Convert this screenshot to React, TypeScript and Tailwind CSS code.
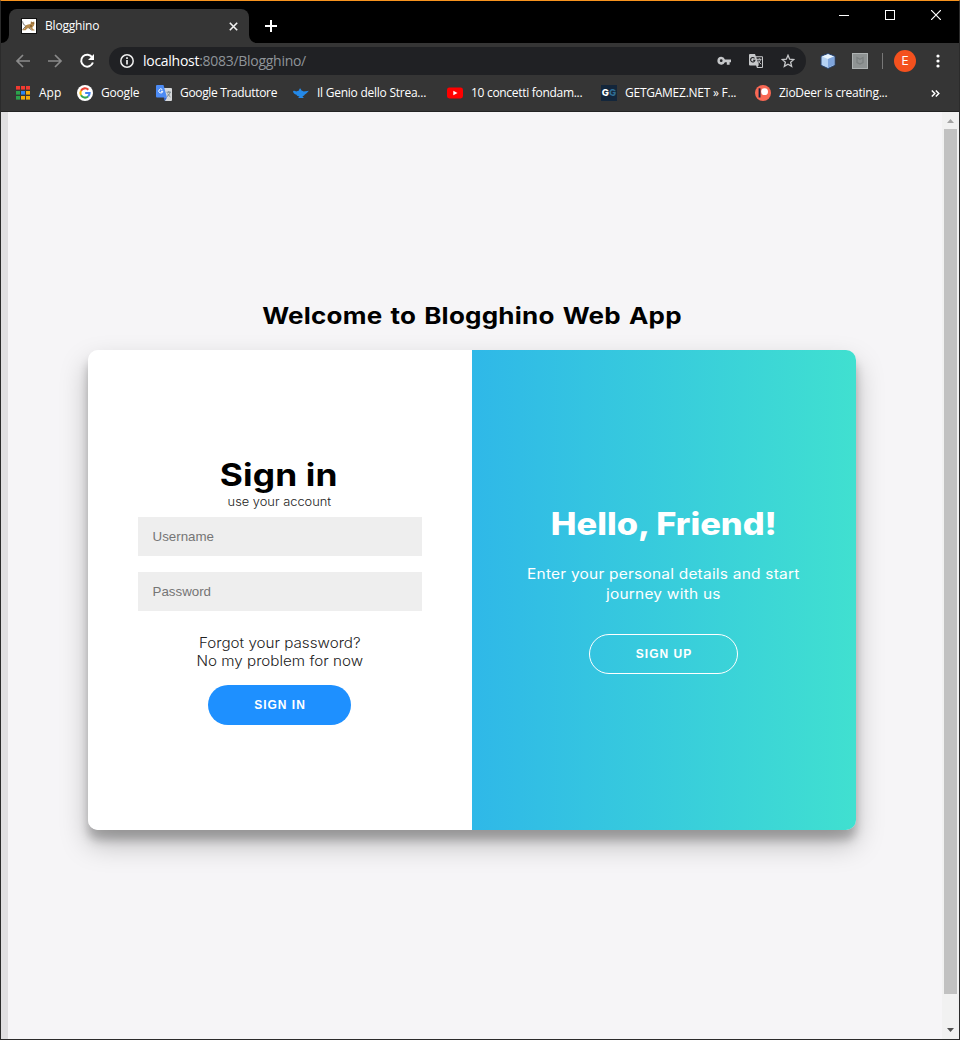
import type { ReactNode } from "react";

const segoe = "font-['Open_Sans','Noto_Sans',sans-serif]";
const geo = "font-['Inter','Noto_Sans',sans-serif]";

function Favicon() {
  return (
    <svg width="16" height="16" viewBox="0 0 16 16" className="block">
      <rect width="16" height="16" fill="#111" />
      <rect x="1" y="1" width="14" height="14" fill="#fff" />
      <path d="M10 3l1 1.2 2.2-.6.3 1.8-.6 2.3-1.5 1.6.4 1.6 1.7.8v.8h-2.5L9.600 10.400 6.500 10.200 4.500 12.300H1.500v-.8l2-.7.8-3.300L7 6.500l2.500-.5z" fill="#b58a4c" />
      <path d="M4.300 7.500C2.500 7 2 5.500 1.600 3.400M1.800 11.500l2.500-3M8 9.800l2.500 2.400" stroke="#555" strokeWidth=".8" fill="none" />
      <path d="M10.500 5h1M12.300 5.200h.7M9 8h2" stroke="#5b3c17" strokeWidth=".9" />
    </svg>
  );
}

function AppsIcon() {
  const colors = ["#f13a30", "#f13a30", "#f13a30", "#2ba24c", "#2a84f0", "#f4ac0b", "#2ba24c", "#f4ac0b", "#f4ac0b"];
  return (
    <svg width="14" height="14" viewBox="0 0 14 14" className="block">
      {colors.map((c, i) => (
        <g key={i}>
          <rect x={(i % 3) * 5} y={Math.floor(i / 3) * 5} width="4" height="3" fill={c} />
          <rect x={(i % 3) * 5} y={Math.floor(i / 3) * 5 + 3} width="4" height="1" fill={c} opacity=".6" />
        </g>
      ))}
    </svg>
  );
}

function GoogleIcon() {
  return (
    <svg width="16" height="16" viewBox="0 0 16 16" className="block">
      <circle cx="8" cy="8" r="8" fill="#fff" />
      <g fill="none" strokeWidth="2.100">
        <path d="M11.300 4.700A4.600 4.600 0 0 0 4 5.700" stroke="#ea4335" />
        <path d="M4 5.700a4.600 4.600 0 0 0 0 4.600" stroke="#fbbc05" />
        <path d="M4 10.300a4.600 4.600 0 0 0 7.100 1.100" stroke="#34a853" />
        <path d="M11.100 11.400A4.600 4.600 0 0 0 12.600 8H8.200" stroke="#4285f4" />
      </g>
    </svg>
  );
}

function TranslateColor() {
  return (
    <svg width="16" height="16" viewBox="0 0 16 16" className="block">
      <path d="M6 3h9a1 1 0 0 1 1 1v11a1 1 0 0 1-1 1H9z" fill="#d6d8da" />
      <path d="M1 0h6.500l3.500 12.500H1a1 1 0 0 1-1-1V1a1 1 0 0 1 1-1z" fill="#4c8bf5" />
      <path d="M7.500 12.500H11L9 16z" fill="#3367d6" />
      <path d="M6.300 4.600A2 2 0 1 0 6.800 6.300H5" stroke="#fff" fill="none" />
      <path d="M10.500 7.200H15M12.800 6v1.200M14 7.300c-.5 2-1.500 3.200-3 4.200M11.700 8.500c.6 1.500 1.500 2.500 2.800 3.500" stroke="#6f7f86" fill="none" strokeWidth=".9" />
    </svg>
  );
}

function LampIcon() {
  return (
    <svg width="16" height="16" viewBox="0 0 16 16" className="block">
      <path d="M7 3.300l1 1 .2 1 2.500 1.100L16 5.700c-1.300.6-1.800 2.600-4.200 3.900-.6 1-1.500 1.500-2.300 1.900l1.500 1.500H5l1.500-1.500C5 11.200 4 10.700 3.500 9.700 1.500 9.200.2 8 0 6.200c1-.6 2-.4 3.200.3L6 5.400l.2-1z" fill="#2489e8" />
    </svg>
  );
}

function YoutubeIcon() {
  return (
    <svg width="16" height="16" viewBox="0 0 16 16" className="block">
      <rect y="2.500" width="16" height="11" rx="2.400" fill="#f00" />
      <path d="M6.300 5.700v4.600L10.500 8z" fill="#fff" />
    </svg>
  );
}

function GameIcon() {
  return (
    <span className={`flex h-4 w-4 items-center justify-center bg-[#13263b] text-[9.5px] font-extrabold leading-none ${geo}`}>
      <span className="text-white">G</span>
      <span className="text-[#2f6c92]">G</span>
    </span>
  );
}

function PatreonIcon() {
  return (
    <svg width="16" height="16" viewBox="0 0 16 16" className="block">
      <circle cx="8" cy="8" r="8" fill="#f96854" />
      <rect x="3.600" y="3.300" width="1.900" height="9.200" fill="#15233f" />
      <circle cx="9.600" cy="6.700" r="3.400" fill="#fff" />
    </svg>
  );
}

function Bookmark({ icon, label, item, text }: { icon: ReactNode; label: string; item: string; text: string }) {
  return (
    <div className={`flex shrink-0 items-center ${item}`}>
      {icon}
      <span className={`whitespace-nowrap text-[12px] leading-4 text-white ${text}`}>{label}</span>
    </div>
  );
}

function TabStrip() {
  return (
    <div className="flex h-[42px] bg-black">
      <div className="flex w-2 items-end">
        <svg width="8" height="8" viewBox="0 0 8 8" className="block"><path d="M8 0v8H0a8 8 0 0 0 8-8z" fill="#353535" /></svg>
      </div>
      <div className="mt-2 flex h-[34px] w-[240px] items-center rounded-t-lg bg-[#353535] pl-3">
        <Favicon />
        <span className="ml-2 w-[184px] text-[12px] leading-4 tracking-[-0.2px] text-white">Blogghino</span>
        <svg width="9" height="9" viewBox="0 0 9 9" className="block"><path d="M.8.8l7.400 7.400M8.200.8L.8 8.200" stroke="#f2f2f2" strokeWidth="1.600" /></svg>
      </div>
      <div className="flex w-2 items-end">
        <svg width="8" height="8" viewBox="0 0 8 8" className="block"><path d="M0 0v8h8a8 8 0 0 1-8-8z" fill="#353535" /></svg>
      </div>
      <svg width="12" height="12" viewBox="0 0 12 12" className="ml-2 mt-[19px] block"><path d="M6 0v12M0 6h12" stroke="#fff" strokeWidth="2" /></svg>
      <div className="ml-auto flex h-7 items-center pr-[18px]">
        <svg width="10" height="10" viewBox="0 0 10 10" className="mr-9 block"><path d="M0 5.500h10" stroke="#fff" /></svg>
        <svg width="10" height="10" viewBox="0 0 10 10" className="mr-9 block"><rect x=".5" y=".5" width="9" height="9" fill="none" stroke="#fff" /></svg>
        <svg width="10" height="10" viewBox="0 0 10 10" className="block"><path d="M0 0l10 10M10 0L0 10" stroke="#fff" strokeWidth="1.200" /></svg>
      </div>
    </div>
  );
}

function Toolbar() {
  return (
    <div className="flex h-9 items-center bg-[#353535] pl-[14px]">
      <svg width="16" height="16" viewBox="0 0 16 16" className="block"><path d="M15 8H2.500M8 2L2 8l6 6" stroke="#8a8a8a" strokeWidth="1.700" fill="none" /></svg>
      <svg width="16" height="16" viewBox="0 0 16 16" className="ml-4 block"><path d="M1 8h12.500M8 2l6 6-6 6" stroke="#8a8a8a" strokeWidth="1.700" fill="none" /></svg>
      <svg width="16" height="16" viewBox="0 0 16 16" className="ml-4 block"><path d="M13.300 4.500A6 6 0 1 0 13.900 9.500" stroke="#fff" strokeWidth="2" fill="none" /><path d="M15 1v6H9z" fill="#fff" /></svg>
      <div className="ml-[14px] flex h-7 w-[697px] items-center rounded-full bg-[#202124] pl-[11px]">
        <svg width="14" height="14" viewBox="0 0 14 14" className="block"><circle cx="7" cy="7" r="6.200" fill="none" stroke="#eee" strokeWidth="1.500" /><path d="M7 6v4.500M7 3.300v1.700" stroke="#eee" strokeWidth="1.700" /></svg>
        <span className="ml-[9px] w-[574px] whitespace-nowrap text-[14px] leading-5 tracking-[-0.28px] text-[#8f9499]"><span className="text-white">localhost</span>:8083/Blogghino/</span>
        <svg width="14" height="10" viewBox="0 0 15 10" className="block"><path fillRule="evenodd" d="M4.500.5a4.200 4.200 0 0 1 4 2.800H15v3h-1.500V9h-3V6.300h-2A4.200 4.200 0 1 1 4.500.5zm0 2.700a1.500 1.500 0 1 0 0 3 1.500 1.500 0 0 0 0-3z" fill="#c6c8ca" /></svg>
        <svg width="14" height="14" viewBox="0 0 14 14" className="ml-[18px] block">
          <path d="M1 0h5l.8 2.300H13a1 1 0 0 1 1 1V13a1 1 0 0 1-1 1H8l-.9-2.500H1a1 1 0 0 1-1-1V1a1 1 0 0 1 1-1z" fill="#c6c8ca" />
          <path d="M7.300 3.300H13V13H8.500l1.300-2z" fill="#202124" />
          <path d="M5.500 4.300A2.200 2.200 0 1 0 6 6.200H4" stroke="#202124" fill="none" strokeWidth="1.100" />
          <path d="M8 5.300h4.500M10.300 4.300v1M11.500 5.500c-.5 2-1.300 3-2.500 4M9.300 6.500c.5 1.500 1.500 2.500 2.800 3.700" stroke="#c6c8ca" fill="none" />
        </svg>
        <svg width="14" height="14" viewBox="0 0 14 14" className="ml-[18px] block"><path d="M7 1.300l1.650 3.850 4.200.35-3.200 2.750 1 4.100L7 10.150l-3.650 2.200 1-4.100-3.200-2.750 4.200-.35z" stroke="#c6c8ca" strokeWidth="1.300" fill="none" /></svg>
      </div>
      <svg width="16" height="16" viewBox="0 0 16 16" className="ml-[14px] block">
        <path d="M8 .5l7 2.800v9L8 15.500 1 12.300v-9z" fill="#b5d2f3" stroke="#28436f" />
        <path d="M8 1.200l6 2.300L8 6 2 3.500z" fill="#e9f4fd" />
        <path d="M8 6l6-2.500v8.300L8 14.700z" fill="#7fa5dc" />
      </svg>
      <svg width="16" height="16" viewBox="0 0 16 16" className="ml-4 block"><rect x=".5" y=".5" width="15" height="15" fill="#8f9393" stroke="#aeb2b2" /><path d="M5 4.500v5L8 11l3-1.500v-5L8 6.200z" fill="none" stroke="#7c8080" strokeWidth="1.300" /></svg>
      <span className="ml-[14px] h-4 w-px bg-[#777]" />
      <span className={`ml-[11px] flex h-[22px] w-[22px] items-center justify-center rounded-full bg-[#f4511e] text-[12px] leading-none text-white ${geo}`}>E</span>
      <svg width="4" height="14" viewBox="0 0 4 14" className="ml-[19.5px] block"><g fill="#fff"><circle cx="2" cy="2" r="1.600" /><circle cx="2" cy="7" r="1.600" /><circle cx="2" cy="12" r="1.600" /></g></svg>
    </div>
  );
}

function BookmarksBar() {
  return (
    <div className="flex h-[33px] items-center border-b border-[#232323] bg-[#353535] pb-1 pl-[15px]">
      <Bookmark icon={<AppsIcon />} label="App" item="w-[61px]" text="ml-[9px]" />
      <Bookmark icon={<GoogleIcon />} label="Google" item="w-[79px]" text="ml-2 tracking-[-0.2px]" />
      <Bookmark icon={<TranslateColor />} label="Google Traduttore" item="w-[137px]" text="ml-2 tracking-[-0.34px]" />
      <Bookmark icon={<LampIcon />} label="Il Genio dello Strea..." item="w-[154px]" text="ml-2 tracking-[-0.25px]" />
      <Bookmark icon={<YoutubeIcon />} label="10 concetti fondam..." item="w-[154px]" text="ml-2 tracking-[-0.3px]" />
      <Bookmark icon={<GameIcon />} label="GETGAMEZ.NET » F..." item="w-[154px]" text="ml-2 tracking-[-0.25px]" />
      <Bookmark icon={<PatreonIcon />} label="ZioDeer is creating..." item="w-[176px]" text="ml-2 tracking-[-0.25px]" />
      <svg width="9" height="7" viewBox="0 0 9 7" className="block"><path d="M.8.500l3 3-3 3M4.800.500l3 3-3 3" fill="none" stroke="#fff" strokeWidth="1.500" /></svg>
    </div>
  );
}

function SignInPanel() {
  return (
    <div className="flex w-1/2 flex-col items-center bg-white px-[50px] pt-[105px]">
      <h1 className={`mr-0.5 scale-x-[1.14] whitespace-nowrap text-[31px] font-bold leading-10 tracking-[0.1px] ${geo}`}>Sign in</h1>
      <span className={`mr-px scale-x-[1.07] whitespace-nowrap text-[12px] font-light leading-[14px] text-[#222] ${geo}`}>use your account</span>
      <input placeholder="Username" className="mt-2 h-[39px] w-[284px] bg-[#eee] px-[14.5px] font-['Liberation_Sans',sans-serif] text-[13.333px] placeholder:text-[#757575]" />
      <input placeholder="Password" className="mt-4 h-[39px] w-[284px] bg-[#eee] px-[14.5px] font-['Liberation_Sans',sans-serif] text-[13.333px] placeholder:text-[#757575]" />
      <p className={`mt-[23px] scale-x-[1.085] whitespace-nowrap text-center text-[14px] font-light leading-[18px] text-[#222] ${geo}`}>Forgot your password?<br />No my problem for now</p>
      <button className="mr-px mt-[15px] h-10 w-[143px] rounded-[20px] bg-[#1e90ff] pl-px font-['Liberation_Sans',sans-serif] text-[12px] font-bold tracking-[1px] text-white">SIGN IN</button>
    </div>
  );
}

function WelcomePanel() {
  return (
    <div className="flex w-1/2 flex-col items-center bg-linear-to-r/srgb from-[#2fb8e8] to-[#40e0d0] pt-[154px] text-white">
      <h1 className={`scale-x-[1.11] whitespace-nowrap text-[31px] font-extrabold leading-10 ${geo}`}>Hello, Friend!</h1>
      <p className={`mr-px mt-5 scale-x-[1.105] whitespace-nowrap text-center text-[14px] leading-5 tracking-[0.2px] ${geo}`}>Enter your personal details and start<br />journey with us</p>
      <button className="mr-px mt-[30px] h-10 w-[149px] rounded-[20px] border border-white pl-px font-['Liberation_Sans',sans-serif] text-[12px] font-bold tracking-[1px]">SIGN UP</button>
    </div>
  );
}

function Scrollbar() {
  return (
    <div className="flex w-[17px] shrink-0 flex-col items-center bg-[#f1f1f1]">
      <svg width="7" height="4" viewBox="0 0 7 4" className="mt-[7px] block"><path d="M0 4l3.500-4L7 4z" fill="#a3a3a3" /></svg>
      <div className="mt-1.5 h-[865px] w-[13px] bg-[#c1c1c1]" />
      <svg width="7" height="4" viewBox="0 0 7 4" className="mt-[34px] block"><path d="M0 0l3.500 4L7 0z" fill="#505050" /></svg>
    </div>
  );
}

export default function App() {
  return (
    <div className={`flex h-[1040px] w-[960px] flex-col overflow-hidden border border-[#2b2b2b] border-t-[#f7931e] bg-[#f6f5f7] text-black ${segoe}`}>
      <TabStrip />
      <Toolbar />
      <BookmarksBar />
      <div className="flex flex-1">
        <div className="w-[7px] shrink-0 bg-[#e0dfe1]" />
        <main className="flex flex-1 flex-col pl-20">
          <h2 className={`mt-[189px] w-[768px] scale-x-[1.13] whitespace-nowrap text-center text-[23px] font-bold leading-[30px] tracking-[0.2px] [word-spacing:1.5px] ${geo}`}>Welcome to Blogghino Web App</h2>
          <div className="mt-[19px] flex h-[480px] w-[768px] overflow-hidden rounded-[10px] shadow-[0_14px_28px_rgba(0,0,0,0.25),0_10px_10px_rgba(0,0,0,0.22)]">
            <SignInPanel />
            <WelcomePanel />
          </div>
        </main>
        <Scrollbar />
      </div>
    </div>
  );
}
